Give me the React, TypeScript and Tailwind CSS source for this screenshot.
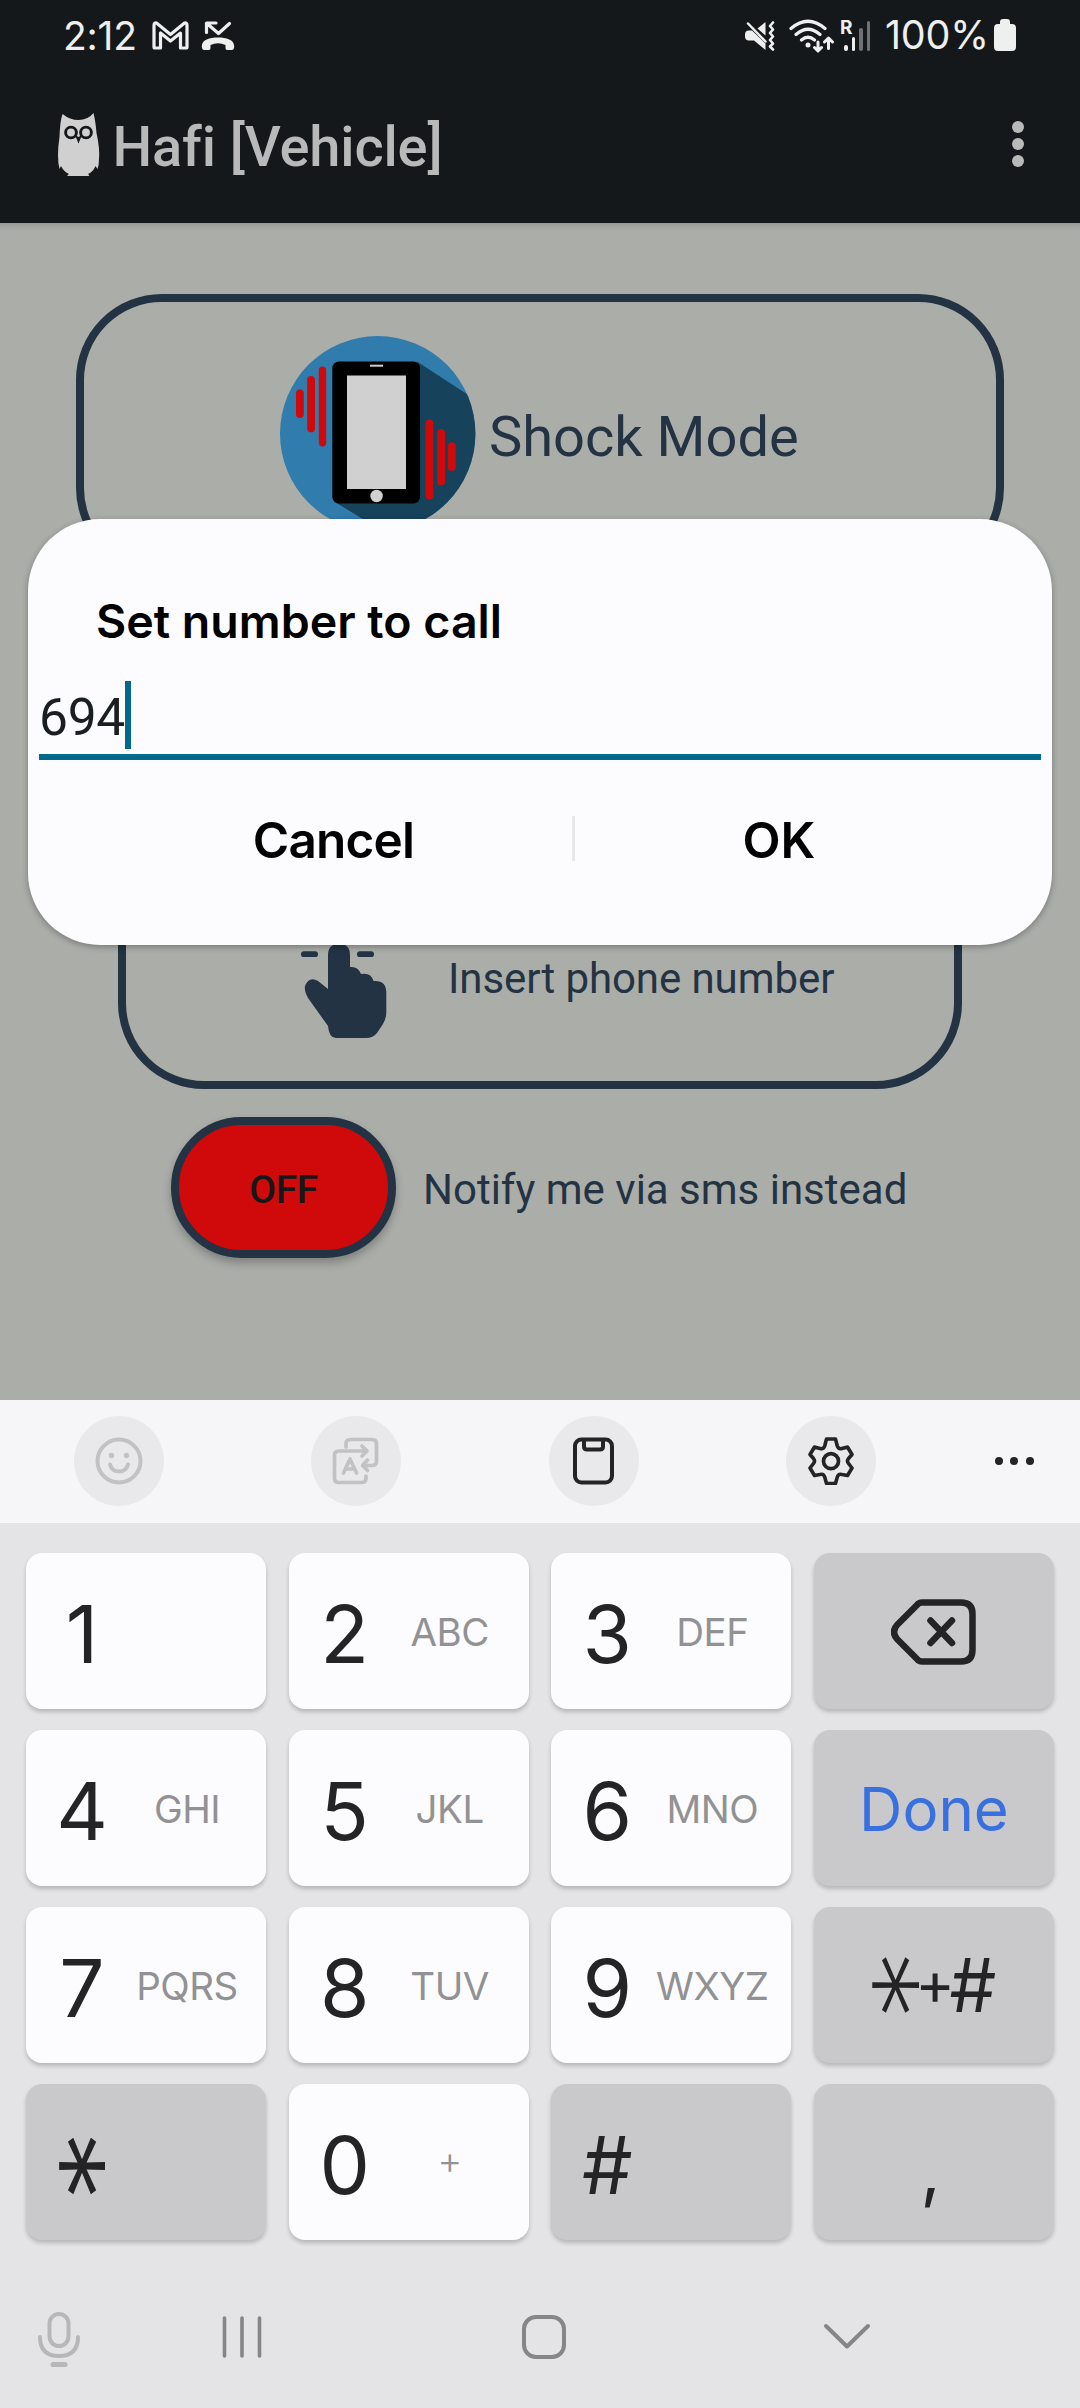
import React from "react";

const ROBOTO = "font-[Roboto,sans-serif]";
const INTER = "font-[Inter,sans-serif]";

function StatusBar() {
  return (
    <div className={`${INTER} flex h-[71px] shrink-0 items-center justify-between pl-[63px] pr-[64px] text-[#eeefef]`}>
      <div className="flex items-center">
        <span className="w-[89px] whitespace-nowrap text-[39px] leading-none tracking-[-0.2px]">2:12</span>
        <svg width="37" height="29" viewBox="0 0 37 29" fill="none" stroke="currentColor" strokeWidth="3.200" strokeLinejoin="round">
          <path d="M2 4.500Q2 1.500 4.500 2L18.500 13.500L32.500 2Q35 1.500 35 4.500V26Q35 27 34 27H28.500V12L18.500 20L8.500 12V27H3Q2 27 2 26Z" />
        </svg>
        <svg className="ml-[12px]" width="34" height="31" viewBox="0 0 34 31" fill="none" stroke="currentColor">
          <path d="M5.500 12.500V3H15M6 3.500L17.500 13.500L28.500 3.500" strokeWidth="3.200" strokeLinecap="round" strokeLinejoin="round" />
          <path d="M1 28C-.5 20 8 17.500 17 17.500S34.500 20 33 28Q32.500 30 31 30H26Q24.500 30 24.500 28V25Q17 21.500 9.500 25V28Q9.500 30 8 30H3Q1.500 30 1 28Z" fill="currentColor" stroke="none" />
        </svg>
      </div>
      <div className="flex items-center">
        <svg width="30" height="31" viewBox="0 0 30 31" fill="none" stroke="currentColor">
          <path d="M4 10.500H7L20.500 23.500V30L9 20.500H4Q0 20.500 0 16.500V14.500Q0 10.500 4 10.500ZM12.500 8.500L20.500 2V15.500Z" fill="currentColor" stroke="none" />
          <path d="M3 3.500L20.500 21.500" strokeWidth="2.500" strokeLinecap="round" />
          <path d="M28 2.500L25 6L28 9.500L25 13L28 16.500L25 20L28 23.500L25 26.500L28 29.500" strokeWidth="2.600" strokeLinecap="round" strokeLinejoin="round" />
        </svg>
        <svg className="ml-[14px]" width="46" height="34" viewBox="0 0 46 34" fill="none" stroke="currentColor" strokeWidth="3.200" strokeLinecap="round">
          <path d="M2 9.500Q19 -5 36 9.500M7 15.500Q19 5 31 15.500M12.500 21Q19 15.500 25.500 21" />
          <circle cx="19" cy="26" r="2.500" fill="currentColor" stroke="none" />
          <path d="M29 23V31.500M25.500 28.500L29 32L32.500 28.500M39.500 29.500V20M35.500 23L39.500 19L43.500 23" strokeWidth="3" strokeLinejoin="round" />
        </svg>
        <div className="relative ml-[5px] flex h-[31px] w-[31px] items-end gap-[4px] pl-[4px]">
          <span className="absolute left-0 top-0 text-[19px] font-bold leading-[15px]">R</span>
          <i className="h-[6px] w-[3.500px] shrink-0 rounded-full bg-current" />
          <i className="h-[14px] w-[3.500px] shrink-0 rounded-full bg-current" />
          <i className="h-[23px] w-[3.500px] shrink-0 rounded-full bg-[#6f7274]" />
          <i className="h-[30px] w-[3.500px] shrink-0 rounded-full bg-[#6f7274]" />
        </div>
        <span className="ml-[14px] w-[109px] whitespace-nowrap text-[39.500px] leading-none tracking-[-0.2px]">100%</span>
        <svg width="22" height="33" viewBox="0 0 22 33" fill="currentColor">
          <path d="M6 5V3Q6 0 9 0H13Q16 0 16 3V5H18Q22 5 22 9V28Q22 32 18 32H4Q0 32 0 28V9Q0 5 4 5Z" />
        </svg>
      </div>
    </div>
  );
}

function Owl() {
  return (
    <svg width="42" height="64" viewBox="0 0 42 64">
      <path
        d="M4.500 1Q12 7 20.500 7Q30 7 35.500 0Q37.500 8 38.500 20Q42 36 41 46Q41 52 39.500 56L37.500 53Q35 59 30 61Q33 63 29 63L12 63Q7 63 11 61Q6 59 3 53L1.500 56Q0 50 0 42Q0 34 1.500 24Q2 8 4.500 1Z"
        fill="#d0d0d0"
      />
      <g fill="none" stroke="#14181b" strokeWidth="2.900">
        <circle cx="13" cy="19.500" r="5.400" />
        <circle cx="28" cy="19.500" r="5.400" />
      </g>
      <path d="M17 22L20.500 24L24 22L20.500 30.500Z" fill="#14181b" />
    </svg>
  );
}

function ShockIcon() {
  return (
    <svg width="196" height="196" viewBox="0 0 196 196">
      <defs>
        <clipPath id="disc">
          <circle cx="97.700" cy="97.700" r="97.700" />
        </clipPath>
      </defs>
      <g clipPath="url(#disc)">
        <rect width="196" height="196" fill="#307cac" />
        <path d="M137 25.500L196 64V196H104L55 166Z" fill="#16425c" />
      </g>
      <rect x="52.300" y="25.500" width="87.700" height="142" rx="6.500" fill="#000" />
      <rect x="67" y="39.500" width="59" height="113.500" fill="#d0d0d0" />
      <rect x="90" y="28.700" width="13" height="2" fill="#d0d0d0" />
      <circle cx="96.600" cy="160" r="6.200" fill="#d0d0d0" />
      <g fill="#d00a0a">
        <rect x="16" y="53.500" width="7.800" height="28.500" rx="3.900" />
        <rect x="27.200" y="40" width="7.800" height="56.300" rx="3.900" />
        <rect x="38.800" y="30.500" width="7.400" height="80" rx="3.700" />
        <rect x="145.700" y="83.500" width="7.600" height="80" rx="3.800" />
        <rect x="157.200" y="93" width="7.800" height="56.300" rx="3.900" />
        <rect x="168" y="106.300" width="7.800" height="28.500" rx="3.900" />
      </g>
    </svg>
  );
}

function Hand() {
  return (
    <svg width="88" height="118" viewBox="0 0 88 118" fill="#233343">
      <rect x="1" y="31.300" width="17" height="5.800" rx="2.900" />
      <rect x="57" y="31.300" width="17" height="5.800" rx="2.900" />
      <rect x="34.600" y="0" width="5.800" height="17" rx="2.900" />
      <path d="M28 69V35Q28 24 39 24Q50 24 50 35V47Q58 46 61 54Q71 52 73.500 61Q86 60 86.300 72V93Q86 99 83 104L77 113Q73 118 66 118H36Q29 118 28 106L8 78Q4 71 5 66Q9 56 18 61Z" />
    </svg>
  );
}

function Dialog() {
  return (
    <div className={`${INTER} absolute left-[28px] top-[519px] flex h-[426px] w-[1024px] flex-col rounded-[72px] bg-[#fcfcfe] px-[11px] pt-[77px] text-black shadow-[0_2px_6px_rgba(0,0,0,0.3)]`}>
      <h2 className="pl-[57px] text-[46.500px] font-semibold leading-[50px]">Set number to call</h2>
      <div className={`${ROBOTO} mt-[35px] flex h-[79px] items-start border-b-[6px] border-[#00698c]`}>
        <span className="w-[86px] text-[51.500px] leading-[73px] tracking-[-0.300px] text-[#1b1e20]">694</span>
        <i className="h-[68px] w-[6px] bg-[#00698c]" />
      </div>
      <div className="flex h-[157px] items-center">
        <button className="w-[533px] pl-[56px] pt-[2px] text-center text-[49.500px] font-semibold leading-[60px] tracking-[-0.800px]">Cancel</button>
        <i className="h-[45px] w-[3px] bg-[#e8e8ea]" />
        <button className="w-[408px] pt-[2px] text-center text-[49.500px] font-semibold leading-[60px]">OK</button>
      </div>
    </div>
  );
}

function AppScreen() {
  return (
    <main className={`${ROBOTO} h-[1177px] shrink-0 bg-[#abada9] pt-[71px] text-[#233343] shadow-[inset_0_8px_8px_-8px_rgba(0,0,0,0.25)]`}>
      <section className="ml-[76px] flex h-[280px] w-[928px] items-center rounded-[86px] border-8 border-[#233343] pl-[196px]">
        <ShockIcon />
        <span className="ml-[13px] pt-[6px] text-[56px] leading-[66px]">Shock Mode</span>
      </section>
      <section className="ml-[118px] mt-[235px] flex h-[280px] w-[844px] items-start rounded-[86px] border-8 border-[#233343] pl-[174px] pt-[103px]">
        <Hand />
        <span className="ml-[60px] mt-[34px] text-[42px] leading-[50px] tracking-[-0.080px]">Insert phone number</span>
      </section>
      <div className="ml-[171px] mt-[28px] flex items-center">
        <button className="h-[141px] w-[225px] rounded-full border-8 border-[#233343] bg-[#d00a0a] pt-[5px] text-center text-[39px] font-medium tracking-[-0.400px] text-[#14181b] shadow-[0_5px_8px_rgba(0,0,0,0.25)]">OFF</button>
        <span className="ml-[27px] pt-[4px] text-[42px] leading-[50px]">Notify me via sms instead</span>
      </div>
    </main>
  );
}

function Tool({ dim = false, children }: { dim?: boolean; children: React.ReactNode }) {
  return (
    <button className={`flex size-[90px] items-center justify-center rounded-full bg-[#e9e9eb] ${dim ? "text-[#c2c2c4]" : "text-[#242426]"}`}>
      {children}
    </button>
  );
}

const stroke = { fill: "none", stroke: "currentColor", strokeWidth: 4, strokeLinecap: "round", strokeLinejoin: "round" } as const;

function Toolbar() {
  return (
    <div className="flex h-[123px] items-center bg-[#f6f6f8] pb-[1px] pl-[74px]">
      <div className="flex w-[802px] justify-between">
        <Tool dim>
          <svg width="48" height="48" viewBox="0 0 48 48" {...stroke}>
            <circle cx="24" cy="24" r="21.500" />
            <path d="M15 27.500Q17 34.500 24 34.500T33 27.500" />
            <circle cx="16.500" cy="18.500" r="2.700" fill="currentColor" stroke="none" />
            <circle cx="31.500" cy="18.500" r="2.700" fill="currentColor" stroke="none" />
          </svg>
        </Tool>
        <Tool dim>
          <svg width="48" height="48" viewBox="0 0 48 48" {...stroke}>
            <path d="M14 10V7Q14 2.500 18.500 2.500H40Q44.500 2.500 44.500 7V24Q44.500 28.500 40 28.500H31M35.500 23L30.500 28.500L35.500 33.500M34 39V41Q34 45.500 29.500 45.500H7Q2.500 45.500 2.500 41V18.500Q2.500 14 7 14H34M30 9L35 14L30 19" strokeWidth="3.700" />
            <path d="M11.500 36L18 22L24.500 36M14 32H22" strokeWidth="3.700" />
          </svg>
        </Tool>
        <Tool>
          <svg width="48" height="48" viewBox="0 0 48 48" {...stroke}>
            <rect x="5" y="2.500" width="37" height="43" rx="6.500" />
            <path d="M14 3V9.500Q14 12.500 17 12.500H30Q33 12.500 33 9.500V3" />
          </svg>
        </Tool>
        <Tool>
          <svg width="48" height="48" viewBox="0 0 48 48" {...stroke} strokeWidth="3.600">
            <path d="M19.500 2H28.500L30.300 9Q31.500 12.500 35 11.500L40.500 10L45 17.500L41.500 21.500Q39.500 24 41.500 26.500L45 31L40.500 38.500L35 37.500Q31.500 36.500 30.300 40L28.500 46.500H19.500L17.700 40Q16.500 36.500 13 37.500L7.500 38.500L3 31L6.500 26.500Q8.500 24 6.500 21.500L3 17.500L7.500 10L13 11.500Q16.500 12.500 17.700 9Z" />
            <circle cx="24" cy="24.200" r="7.500" strokeWidth="3.700" />
          </svg>
        </Tool>
      </div>
      <div className="ml-[119px] flex gap-[7.400px]">
        <i className="size-[8px] rounded-full bg-[#242426]" />
        <i className="size-[8px] rounded-full bg-[#242426]" />
        <i className="size-[8px] rounded-full bg-[#242426]" />
      </div>
    </div>
  );
}

const keyBase = "flex h-[156px] w-[240px] rounded-[16px] text-[#242426] shadow-[0_3px_4px_rgba(0,0,0,0.2)]";
const whiteKey = `${keyBase} items-start bg-[#fcfcfe]`;
const greyKey = `${keyBase} bg-[#c9c9cb]`;

function Digit({ n, sub = "" }: { n: string; sub?: string }) {
  return (
    <button className={whiteKey}>
      <span className="w-[112px] pt-[36px] text-center text-[80px] leading-[90px]">{n}</span>
      <span className={`-ml-[11px] w-[120px] text-center text-[38.500px] leading-[50px] tracking-[-0.500px] text-[#929294] ${sub === "+" ? "pt-[51px] font-light" : "pt-[54px]"}`}>
        {sub}
      </span>
    </button>
  );
}

function Keypad() {
  return (
    <div className="mx-[26px] mt-[30px] grid grid-cols-[240px_240px_240px_240px] justify-between gap-y-[21px]">
      <Digit n="1" />
      <Digit n="2" sub="ABC" />
      <Digit n="3" sub="DEF" />
      <button className={`${greyKey} items-start justify-center pt-[46px]`}>
        <svg width="86" height="66" viewBox="0 0 86 66" {...stroke} strokeWidth="6.500">
          <path d="M31 3.500H70Q81.500 3.500 81.500 15V51Q81.500 62.500 70 62.500H31Q28 62.500 26 60L6 40Q0 33 6 26L26 6Q28 3.500 31 3.500Z" />
          <path d="M39.500 21.500L61 44M61 21.500L39.500 44" />
        </svg>
      </button>
      <Digit n="4" sub="GHI" />
      <Digit n="5" sub="JKL" />
      <Digit n="6" sub="MNO" />
      <button className={`${greyKey} items-start justify-center pt-[44px] text-[60px] leading-[70px]`}>
        <span className="text-[#3870e0]">Done</span>
      </button>
      <Digit n="7" sub="PQRS" />
      <Digit n="8" sub="TUV" />
      <Digit n="9" sub="WXYZ" />
      <button className={`${greyKey} items-center justify-center`}>
        <span className="-ml-[20px] mr-[18px] flex h-[60px] w-[46px] shrink-0 rotate-90 scale-x-[1.3] items-center justify-center text-[114px] font-extralight leading-none">*</span>
        <span className="-mt-[4px] flex w-[34px] shrink-0 justify-center text-[60px] leading-[60px]">+</span>
        <span className="flex w-[42px] shrink-0 justify-center text-[74px] leading-[60px]">#</span>
      </button>
      <button className={`${greyKey} items-start`}>
        <span className="ml-[16px] mt-[52px] flex h-[60px] w-[45px] rotate-90 scale-x-[1.32] items-center justify-center text-[112px] font-light leading-none">*</span>
      </button>
      <Digit n="0" sub="+" />
      <button className={`${greyKey} items-start`}>
        <span className="w-[112px] pt-[36px] text-center text-[80px] leading-[90px]">#</span>
      </button>
      <button className={`${greyKey} items-start justify-center pr-[7px] pt-[41px] text-[70px] leading-[90px]`}>,</button>
    </div>
  );
}

function NavBar() {
  return (
    <nav className="mt-[70px] flex items-start pl-[37px] text-[#868688]">
      <svg width="44" height="58" viewBox="0 0 44 58" {...stroke} stroke="#b7b7b9">
        <rect x="12.500" y="4" width="19" height="32" rx="9.500" />
        <path d="M3 27Q3 46 22 46T41 27" />
        <path d="M16 54.500H28" strokeWidth="5" />
      </svg>
      <svg className="ml-[140px] mt-[5px]" width="42" height="44" viewBox="0 0 42 44" {...stroke} strokeWidth="3.600">
        <path d="M3.500 3V41M21 3V41M38.500 3V41" />
      </svg>
      <svg className="ml-[258px] mt-[4px]" width="46" height="46" viewBox="0 0 46 46" {...stroke}>
        <rect x="3" y="3" width="40" height="40" rx="12" />
      </svg>
      <svg className="ml-[256px] mt-[13px]" width="48" height="28" viewBox="0 0 48 28" {...stroke}>
        <path d="M3 3L24 23.500L45 3" />
      </svg>
    </nav>
  );
}

export default function App() {
  return (
    <div className="relative flex h-[2408px] w-[1080px] flex-col overflow-hidden bg-[#e4e4e6]">
      <header className="h-[223px] shrink-0 bg-[#14181b]">
        <StatusBar />
        <div className={`${ROBOTO} flex h-[152px] items-center pl-[58px] pr-[56px] text-[#b8b9b9]`}>
          <div className="-mt-[4px]">
            <Owl />
          </div>
          <h1 className="ml-[12.500px] flex-1 text-[56px] font-medium leading-none tracking-[-0.150px]">Hafi [Vehicle]</h1>
          <div className="-mt-[6px] flex flex-col gap-[5px]">
            <i className="size-[12px] rounded-full bg-current" />
            <i className="size-[12px] rounded-full bg-current" />
            <i className="size-[12px] rounded-full bg-current" />
          </div>
        </div>
      </header>
      <AppScreen />
      <div className={`${INTER} flex-1`}>
        <Toolbar />
        <Keypad />
        <NavBar />
      </div>
      <Dialog />
    </div>
  );
}
